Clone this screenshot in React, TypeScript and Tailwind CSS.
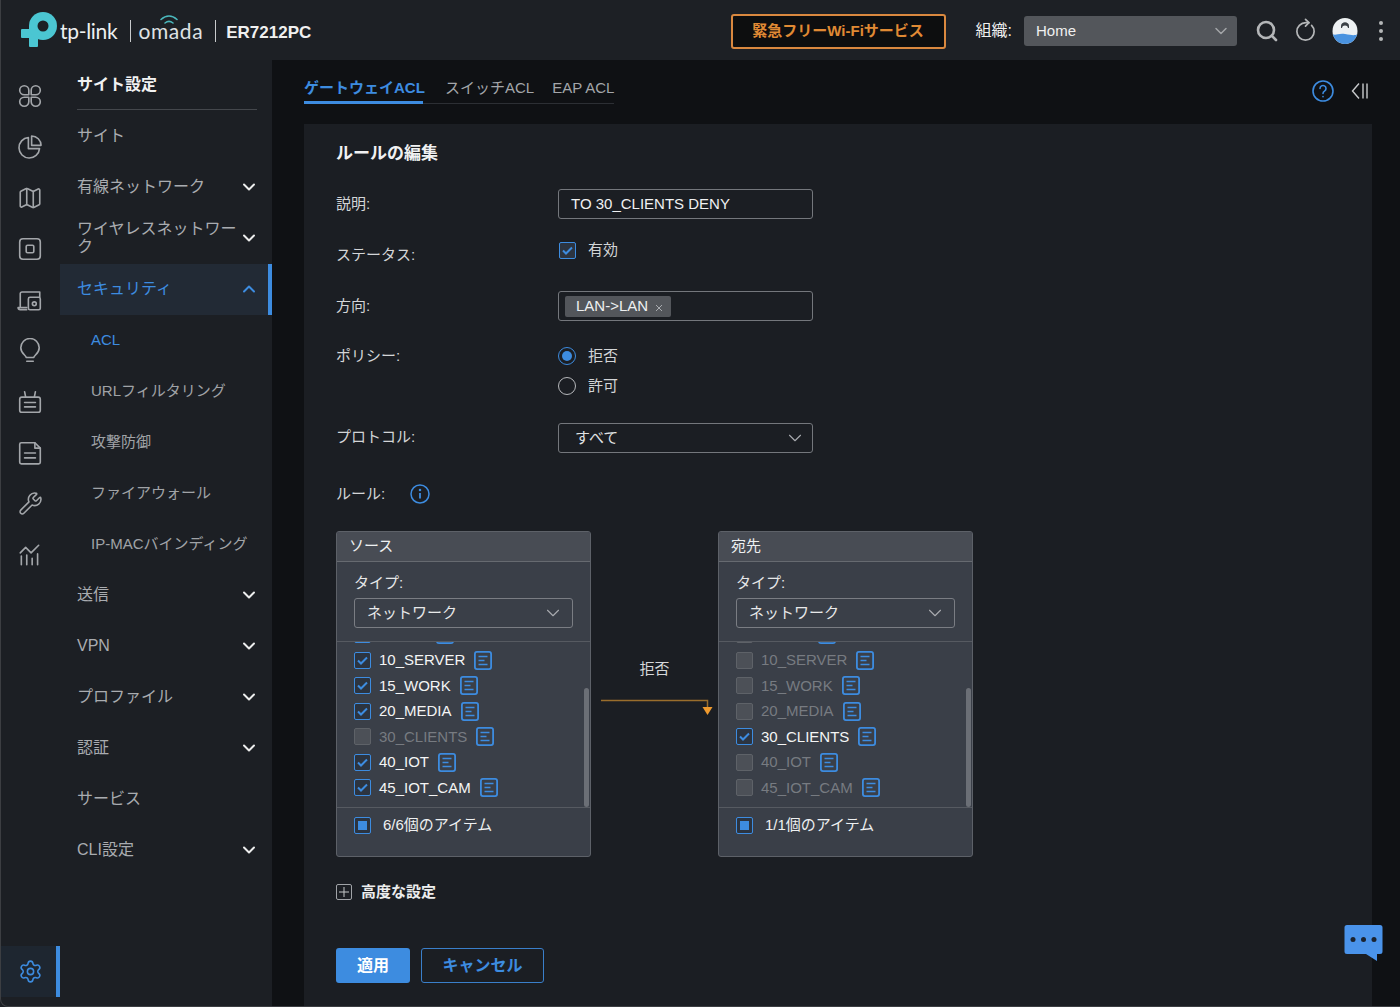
import React from "react";
import { ChevronDown, ChevronUp, Search, RotateCw, Settings, Map as MapIcon, Wrench } from "lucide-react";

const BLUE = "#3d8ce0";

function RailIcon({ children }: { children: React.ReactNode }) {
  return (
    <div className="h-[51px] flex items-center justify-center">
      <svg width="26" height="26" viewBox="0 0 24 24" fill="none" stroke="#a3a6aa" strokeWidth="1.5" strokeLinecap="round" strokeLinejoin="round">
        {children}
      </svg>
    </div>
  );
}

function Rail() {
  return (
    <div className="w-[60px] shrink-0 flex flex-col justify-between pt-[10px] pb-[10px]">
      <div>
        <RailIcon>
          <path d="M6.700 2.500a4.200 4.200 0 0 0 0 8.400h4.200V6.700a4.200 4.200 0 0 0-4.200-4.200z" />
          <path d="M17.300 2.500a4.200 4.200 0 0 1 0 8.400h-4.200V6.700a4.200 4.200 0 0 1 4.200-4.200z" />
          <path d="M6.700 21.500a4.200 4.200 0 0 1 0-8.400h4.200v4.200a4.200 4.200 0 0 1-4.200 4.200z" />
          <path d="M17.300 21.500a4.200 4.200 0 0 0 0-8.400h-4.200v4.200a4.200 4.200 0 0 0 4.200 4.200z" />
        </RailIcon>
        <RailIcon>
          <path d="M10.500 3.200a9.500 9.500 0 1 0 10.300 10.300H10.500z" />
          <path d="M13.500 1.800a8.800 8.800 0 0 1 8.700 8.700h-8.700z" />
        </RailIcon>
        <div className="h-[51px] flex items-center justify-center">
          <MapIcon size={26} color="#a3a6aa" strokeWidth={1.5} />
        </div>
        <RailIcon>
          <rect x="2.500" y="2.500" width="19" height="19" rx="3" />
          <rect x="8.500" y="8.500" width="7" height="7" rx="1.200" />
        </RailIcon>
        <RailIcon>
          <path d="M3 18V6.200a1.600 1.600 0 0 1 1.600-1.600H21V9" />
          <path d="M1 19h8M1 19c0 1 .8 2 2 2h6" />
          <rect x="10.500" y="9.500" width="11" height="11.500" rx="1.500" />
          <circle cx="16" cy="15.500" r="1.800" />
        </RailIcon>
        <RailIcon>
          <path d="M8.500 18c0-2-5-3.500-5-9a8.500 8.500 0 0 1 17 0c0 5.500-5 7-5 9z" />
          <path d="M9 21.500h6" />
        </RailIcon>
        <RailIcon>
          <rect x="2.500" y="7.500" width="19" height="14" rx="2" />
          <path d="M7 2.500l1 5M17 2.500l-1 5M7 12.500h10M7 16.500h10" />
        </RailIcon>
        <RailIcon>
          <path d="M2.500 4A1.500 1.500 0 0 1 4 2.500h12.500l5 5v13a1.500 1.500 0 0 1-1.500 1.500H4a1.500 1.500 0 0 1-1.500-1.500z" />
          <path d="M16.500 2.500v5h5M7 12h10M7 16.500h10" />
        </RailIcon>
        <div className="h-[51px] flex items-center justify-center">
          <Wrench size={25} color="#a3a6aa" strokeWidth={1.5} className="-scale-x-100 rotate-90" />
        </div>
        <RailIcon>
          <path d="M4 21v-8M9 21v-9M14 21v-6M19 21V11" />
          <path d="M3 10l5-5 5 5 7-7" />
        </RailIcon>
      </div>
      <div className="h-[51px] w-[60px] pl-[4px] flex items-center justify-center border-r-4 border-[#3d8ce0] bg-[#1e2630]">
        <Settings size={25} color={BLUE} strokeWidth={1.5} />
      </div>
    </div>
  );
}

function MenuRow({ label, chevron }: { label: string; chevron?: boolean }) {
  return (
    <div className="h-[51px] flex items-center justify-between pl-[17px] pr-[13px] text-[16px] text-[#a9acb0]">
      <span>{label}</span>
      {chevron && <ChevronDown size={20} color="#eceded" strokeWidth={2.4} />}
    </div>
  );
}

function SubRow({ label, active }: { label: string; active?: boolean }) {
  return (
    <div className={`h-[51px] flex items-center pl-[31px] text-[15px] ${active ? "text-[#3d8ce0]" : "text-[#a0a3a7]"}`}>
      {label}
    </div>
  );
}

function Menu() {
  return (
    <div className="w-[212px] shrink-0">
      <div className="h-[50px] mx-[17px] mr-[15px] flex items-center border-b border-[#44474c] text-[16px] font-bold text-[#f2f2f2]">
        サイト設定
      </div>
      <MenuRow label="サイト" />
      <MenuRow label="有線ネットワーク" chevron />
      <div className="h-[52px] flex items-center justify-between pl-[17px] pr-[13px] text-[16px] leading-[18px] text-[#a9acb0]">
        <span className="w-[162px]">ワイヤレスネットワーク</span>
        <ChevronDown size={20} color="#eceded" strokeWidth={2.4} />
      </div>
      <div className="h-[51px] pb-[2px] flex items-center justify-between pl-[17px] pr-[9px] text-[16px] text-[#3d8ce0] bg-[#222a35] border-r-4 border-[#3d8ce0]">
        <span>セキュリティ</span>
        <ChevronUp size={20} color={BLUE} strokeWidth={2.4} />
      </div>
      <SubRow label="ACL" active />
      <SubRow label="URLフィルタリング" />
      <SubRow label="攻撃防御" />
      <SubRow label="ファイアウォール" />
      <SubRow label="IP-MACバインディング" />
      <div className="mt-[-1px]">
        <MenuRow label="送信" chevron />
        <MenuRow label="VPN" chevron />
        <MenuRow label="プロファイル" chevron />
        <MenuRow label="認証" chevron />
        <MenuRow label="サービス" />
        <MenuRow label="CLI設定" chevron />
      </div>
    </div>
  );
}

function Header() {
  return (
    <div className="h-[60px] shrink-0 bg-[#1d2025] flex items-center pl-[20px] pr-[17px] pt-[2px] text-white">
      <svg width="38" height="38" viewBox="20 15 38 38" className="shrink-0">
        <rect x="29" y="29" width="9" height="21" rx="1" fill="#4bc6d2" />
        <rect x="21" y="32" width="17" height="9" rx="1" fill="#4bc6d2" />
        <circle cx="43" cy="29" r="14" fill="#4bc6d2" />
        <circle cx="43" cy="29" r="5.500" fill="#1d2025" />
      </svg>
      <span className="ml-[2px] text-[21px] text-[#eef0f1] tracking-[-0.3px] [font-family:Lato,sans-serif]">tp-link</span>
      <div className="w-px h-[22px] bg-[#c8cacc] ml-[13px]" />
      <div className="relative ml-[7px]">
        <span className="text-[21px] text-[#dfe2e4] tracking-[0.6px] [font-family:Lato,sans-serif]">omada</span>
        <svg width="20" height="12" viewBox="0 0 20 12" fill="none" stroke="#4bb8bd" strokeWidth="1.600" strokeLinecap="round" className="absolute left-[21px] top-[-2px]">
          <path d="M2 6.500C7 2 13 2 18 6.500" />
          <path d="M6 10c2.500-2 5.500-2 8 0" />
        </svg>
      </div>
      <div className="w-px h-[22px] bg-[#c8cacc] ml-[12px]" />
      <span className="ml-[10px] mt-[4px] text-[17px] font-bold text-[#f0f0f0]">ER7212PC</span>
      <div className="ml-auto w-[215px] h-[35px] flex items-center justify-center rounded-[3px] border-2 border-[#d9883f] bg-[#0d0e0f] text-[15px] font-bold text-[#e08a34]">
        緊急フリーWi-Fiサービス
      </div>
      <span className="ml-[30px] text-[16px] text-[#f0f0f0]">組織:</span>
      <div className="ml-[12px] w-[213px] h-[30px] rounded-[3px] bg-[#53565b] flex items-center justify-between pl-[12px] pr-[6px] text-[15px] text-[#f0f0f0]">
        <span>Home</span>
        <ChevronDown size={20} color="#a3a5a8" strokeWidth={1.800} />
      </div>
      <Search size={24} color="#b4b6b8" strokeWidth={2.600} className="ml-[18px]" />
      <RotateCw size={23} color="#b4b6b8" strokeWidth={1.800} className="ml-[15px] -rotate-45" />
      <svg width="26" height="26" viewBox="0 0 26 26" className="ml-[15px]">
        <defs>
          <clipPath id="av">
            <ellipse cx="13" cy="13" rx="12.500" ry="13" />
          </clipPath>
        </defs>
        <g clipPath="url(#av)">
          <rect width="26" height="26" fill="#eef1f3" />
          <path d="M9 8c0-5 8-5 8 0v2H9z" fill="#3b4046" />
          <circle cx="13" cy="10.500" r="3" fill="#eef1f3" />
          <path d="M0 16c4 2 6-1 13 0s9 2 13 0v10H0z" fill="#4a93e0" />
        </g>
      </svg>
      <div className="ml-[21px] flex flex-col gap-[4px]">
        <div className="w-[4px] h-[4px] rounded-full bg-[#b4b6b8]" />
        <div className="w-[4px] h-[4px] rounded-full bg-[#b4b6b8]" />
        <div className="w-[4px] h-[4px] rounded-full bg-[#b4b6b8]" />
      </div>
    </div>
  );
}

function Check({ on, mixed, disabled }: { on?: boolean; mixed?: boolean; disabled?: boolean }) {
  if (disabled) return <div className="w-[17px] h-[17px] shrink-0 rounded-[2px] border border-[#5e6268] bg-[#4c5057]" />;
  return (
    <div className="w-[17px] h-[17px] shrink-0 rounded-[2px] border-[1.5px] border-[#3d8ce0] bg-[#2c3440] flex items-center justify-center">
      {on && (
        <svg width="11" height="9" viewBox="0 0 11 9" fill="none" stroke="#3d8ce0" strokeWidth="2">
          <path d="M1 4.500l3 3 6-6" />
        </svg>
      )}
      {mixed && <div className="w-[9px] h-[9px] bg-[#3d8ce0]" />}
    </div>
  );
}

function DocIcon() {
  return (
    <svg width="18" height="19" viewBox="0 0 18 19" fill="none" stroke="#3d8ce0" className="shrink-0">
      <rect x="0.900" y="0.900" width="16.200" height="17.200" rx="2" strokeWidth="1.800" />
      <path d="M4.500 5.500h9M4.500 9.500h6M4.500 13.500h9" strokeWidth="1.300" />
    </svg>
  );
}

type Item = { name: string; on: boolean };

function TransferBox({ title, items, count }: { title: string; items: Item[]; count: string }) {
  return (
    <div className="w-[255px] h-[326px] rounded-[3px] border border-[#5d6168] bg-[#3a3f48] flex flex-col overflow-hidden">
      <div className="h-[30px] shrink-0 flex items-center pl-[12px] bg-[#484c54] border-b border-[#666a70] text-[15px] text-[#eef0f1]">{title}</div>
      <div className="h-[80px] shrink-0 border-b border-[#565a61] px-[17px] pt-[11px]">
        <div className="h-[20px] flex items-center text-[15px] text-[#e6e7e8]">タイプ:</div>
        <div className="mt-[5px] h-[30px] rounded-[3px] border border-[#7a7d83] flex items-center justify-between pl-[12px] pr-[8px] text-[15px] text-[#e8e9ea]">
          <span>ネットワーク</span>
          <ChevronDown size={22} color="#a9abaf" strokeWidth={1.200} />
        </div>
      </div>
      <div className="relative h-[166px] shrink-0 overflow-hidden border-b border-[#565a61] pl-[17px]">
        <div className="mt-[-20px]">
          <div className="h-[25.500px] flex items-center gap-[8px]">
            <Check disabled={items[0].on === false} on={items[0].on} />
            <span className="w-[48px]" />
            <div className="ml-[1px]">
              <DocIcon />
            </div>
          </div>
          {items.map((it) => (
            <div key={it.name} className="h-[25.500px] flex items-center">
              <Check on={it.on} disabled={!it.on} />
              <span className={`ml-[8px] text-[15px] ${it.on ? "text-[#f4f5f5]" : "text-[#777b81]"}`}>{it.name}</span>
              <div className="ml-[9px]">
                <DocIcon />
              </div>
            </div>
          ))}
        </div>
        <div className="absolute right-[1px] top-[46px] bottom-0 w-[5px] rounded-[3px] bg-[#6b6f76]" />
      </div>
      <div className="pl-[17px] flex items-center h-[34px]">
        <Check mixed />
        <span className="ml-[12px] text-[15px] text-[#eef0f1]">{count}</span>
      </div>
    </div>
  );
}

function Label({ children, className = "" }: { children: React.ReactNode; className?: string }) {
  return <div className={`w-[222px] shrink-0 text-[15px] text-[#d3d5d7] ${className}`}>{children}</div>;
}

const names = ["10_SERVER", "15_WORK", "20_MEDIA", "30_CLIENTS", "40_IOT", "45_IOT_CAM"];

function Panel() {
  return (
    <div className="flex-1 bg-[#1b1e23] pl-[32px] pt-[19px]">
      <div className="h-[22px] flex items-center text-[17px] font-bold text-[#f0f1f2]">ルールの編集</div>

      <div className="mt-[24px] flex items-center h-[30px]">
        <Label>説明:</Label>
        <div className="w-[255px] h-[30px] rounded-[3px] border-[1.5px] border-[#74777c] flex items-center pl-[12px] text-[15px] text-[#f0f1f2]">
          TO 30_CLIENTS DENY
        </div>
      </div>

      <div className="mt-[19px] flex h-[30px]">
        <Label className="pt-[6px]">ステータス:</Label>
        <div className="flex items-start pt-[4px] pl-[1px]">
          <Check on />
          <span className="ml-[12px] mt-[-3px] text-[15px] text-[#d3d5d7]">有効</span>
        </div>
      </div>

      <div className="mt-[23px] flex items-center h-[30px]">
        <Label>方向:</Label>
        <div className="w-[255px] h-[30px] rounded-[3px] border-[1.5px] border-[#74777c] flex items-center pl-[6px]">
          <div className="h-[21px] w-[106px] rounded-[2px] bg-[#53565b] flex items-center pl-[11px] text-[15px] text-[#eef0f1]">
            LAN-&gt;LAN
            <svg width="8" height="8" viewBox="0 0 8 8" stroke="#a9acb0" strokeWidth="1" className="ml-[7px] mt-[4px]">
              <path d="M1 1l6 6M7 1l-6 6" />
            </svg>
          </div>
        </div>
      </div>

      <div className="mt-[20px] flex">
        <Label className="leading-[30px]">ポリシー:</Label>
        <div>
          <div className="h-[30px] flex items-center">
            <div className="w-[18px] h-[18px] rounded-full border-[1.5px] border-[#3d8ce0] flex items-center justify-center">
              <div className="w-[10px] h-[10px] rounded-full bg-[#3d8ce0]" />
            </div>
            <span className="ml-[12px] text-[15px] text-[#d3d5d7]">拒否</span>
          </div>
          <div className="h-[30px] flex items-center">
            <div className="w-[18px] h-[18px] rounded-full border-[1.5px] border-[#b6b8bb]" />
            <span className="ml-[12px] text-[15px] text-[#d3d5d7]">許可</span>
          </div>
        </div>
      </div>

      <div className="mt-[22px] flex items-center h-[30px]">
        <Label className="mt-[-2px]">プロトコル:</Label>
        <div className="w-[255px] h-[30px] rounded-[3px] border-[1.5px] border-[#74777c] flex items-center justify-between pl-[16px] pr-[6px] text-[15px] text-[#e0e2e3]">
          <span>すべて</span>
          <ChevronDown size={22} color="#a9abaf" strokeWidth={1.200} />
        </div>
      </div>

      <div className="mt-[26px] h-[30px] flex items-center">
        <span className="text-[15px] text-[#d3d5d7] w-[74px]">ルール:</span>
        <svg width="20" height="20" viewBox="0 0 20 20" fill="none" stroke="#3d8ce0">
          <circle cx="10" cy="10" r="9" strokeWidth="1.500" />
          <path d="M10 9v5.500" strokeWidth="1.800" />
          <circle cx="10" cy="6" r="0.600" strokeWidth="1.300" />
        </svg>
      </div>

      <div className="mt-[22px] flex">
        <TransferBox title="ソース" count="6/6個のアイテム" items={names.map((n) => ({ name: n, on: n !== "30_CLIENTS" }))} />
        <div className="w-[127px] flex flex-col items-center pt-[128px]">
          <div className="h-[20px] flex items-center text-[15px] text-[#d6d8da]">拒否</div>
          <svg width="127" height="26" viewBox="0 0 127 26" className="mt-[11px]">
            <path d="M10 10.500H116.500V18" fill="none" stroke="#9a6e2c" strokeWidth="1.500" />
            <path d="M111.500 17h10l-5 8z" fill="#ef9a2e" />
          </svg>
        </div>
        <TransferBox title="宛先" count="1/1個のアイテム" items={names.map((n) => ({ name: n, on: n === "30_CLIENTS" }))} />
      </div>

      <div className="mt-[25px] h-[20px] flex items-center">
        <div className="w-[16px] h-[16px] rounded-[2px] border border-[#a0a3a7] flex items-center justify-center text-[#c4c6c8]">
          <svg width="10" height="10" viewBox="0 0 10 10" stroke="currentColor" strokeWidth="1">
            <path d="M5 0v10M0 5h10" />
          </svg>
        </div>
        <span className="ml-[9px] text-[15px] font-bold text-[#eceded]">高度な設定</span>
      </div>

      <div className="mt-[46px] flex gap-[11px]">
        <div className="w-[74px] h-[35px] rounded-[3px] bg-[#3d8ce0] flex items-center justify-center text-[16px] font-bold text-white">適用</div>
        <div className="w-[123px] h-[35px] rounded-[3px] border-[1.5px] border-[#3a7fca] flex items-center justify-center text-[16px] font-bold text-[#3d8ce0]">キャンセル</div>
      </div>
    </div>
  );
}

function Main() {
  return (
    <div className="flex-1 flex flex-col bg-[#0f1114] pl-[32px] pr-[28px] min-w-0">
      <div className="h-[64px] shrink-0 flex items-start pt-[17px] text-[15px]">
        <div className="h-[27px] flex border-b border-[#2c2f34] whitespace-nowrap">
          <div className="w-[119px] h-[27px] border-b-[3px] border-[#3d8ce0] font-bold text-[#3d8ce0] leading-[22px]">ゲートウェイACL</div>
          <div className="ml-[22px] text-[#a3a6aa] leading-[22px]">スイッチACL</div>
          <div className="ml-[18px] text-[#a3a6aa] leading-[22px]">EAP ACL</div>
        </div>
        <div className="ml-auto flex items-center mt-[3px] mr-[3px]">
          <svg width="22" height="22" viewBox="0 0 22 22" fill="none" stroke="#3d8ce0" strokeWidth="1.600" strokeLinecap="round">
            <circle cx="11" cy="11" r="10" />
            <path d="M8 8.500a3 3 0 1 1 4.500 2.600c-1 .6-1.500 1.200-1.500 2.400" />
            <path d="M11 16.500v.3" />
          </svg>
          <svg width="18" height="18" viewBox="0 0 18 18" fill="none" stroke="#c8cacc" strokeWidth="1.400" className="ml-[17px]">
            <path d="M8 1.500L1.500 9 8 16.500M12 1.500v15M16 1.500v15" />
          </svg>
        </div>
      </div>
      <Panel />
    </div>
  );
}

export default function App() {
  return (
    <div className="relative w-[1400px] h-[1007px] overflow-hidden flex flex-col bg-[#0f1114] [font-family:'Liberation_Sans','Noto_Sans_CJK_JP',sans-serif]">
      <Header />
      <div className="flex-1 flex min-h-0">
        <div className="w-[272px] shrink-0 flex bg-[#1c1f24]">
          <Rail />
          <Menu />
        </div>
        <Main />
      </div>
      <svg width="40" height="38" viewBox="0 0 40 38" className="absolute right-[16px] top-[924px]">
        <path d="M3 1h33a2.500 2.500 0 0 1 2.500 2.500v24A2.500 2.500 0 0 1 36 30h-3v7l-11-7H3A2.500 2.500 0 0 1 .5 27.500v-24A2.500 2.500 0 0 1 3 1z" fill="#4a93ea" />
        <circle cx="9" cy="15.500" r="2.500" fill="#1b2330" />
        <circle cx="19.500" cy="15.500" r="2.500" fill="#1b2330" />
        <circle cx="30" cy="15.500" r="2.500" fill="#1b2330" />
      </svg>
      <div className="absolute inset-0 pointer-events-none border-l border-b border-[#3c3e42] rounded-bl-[8px]" />
    </div>
  );
}
